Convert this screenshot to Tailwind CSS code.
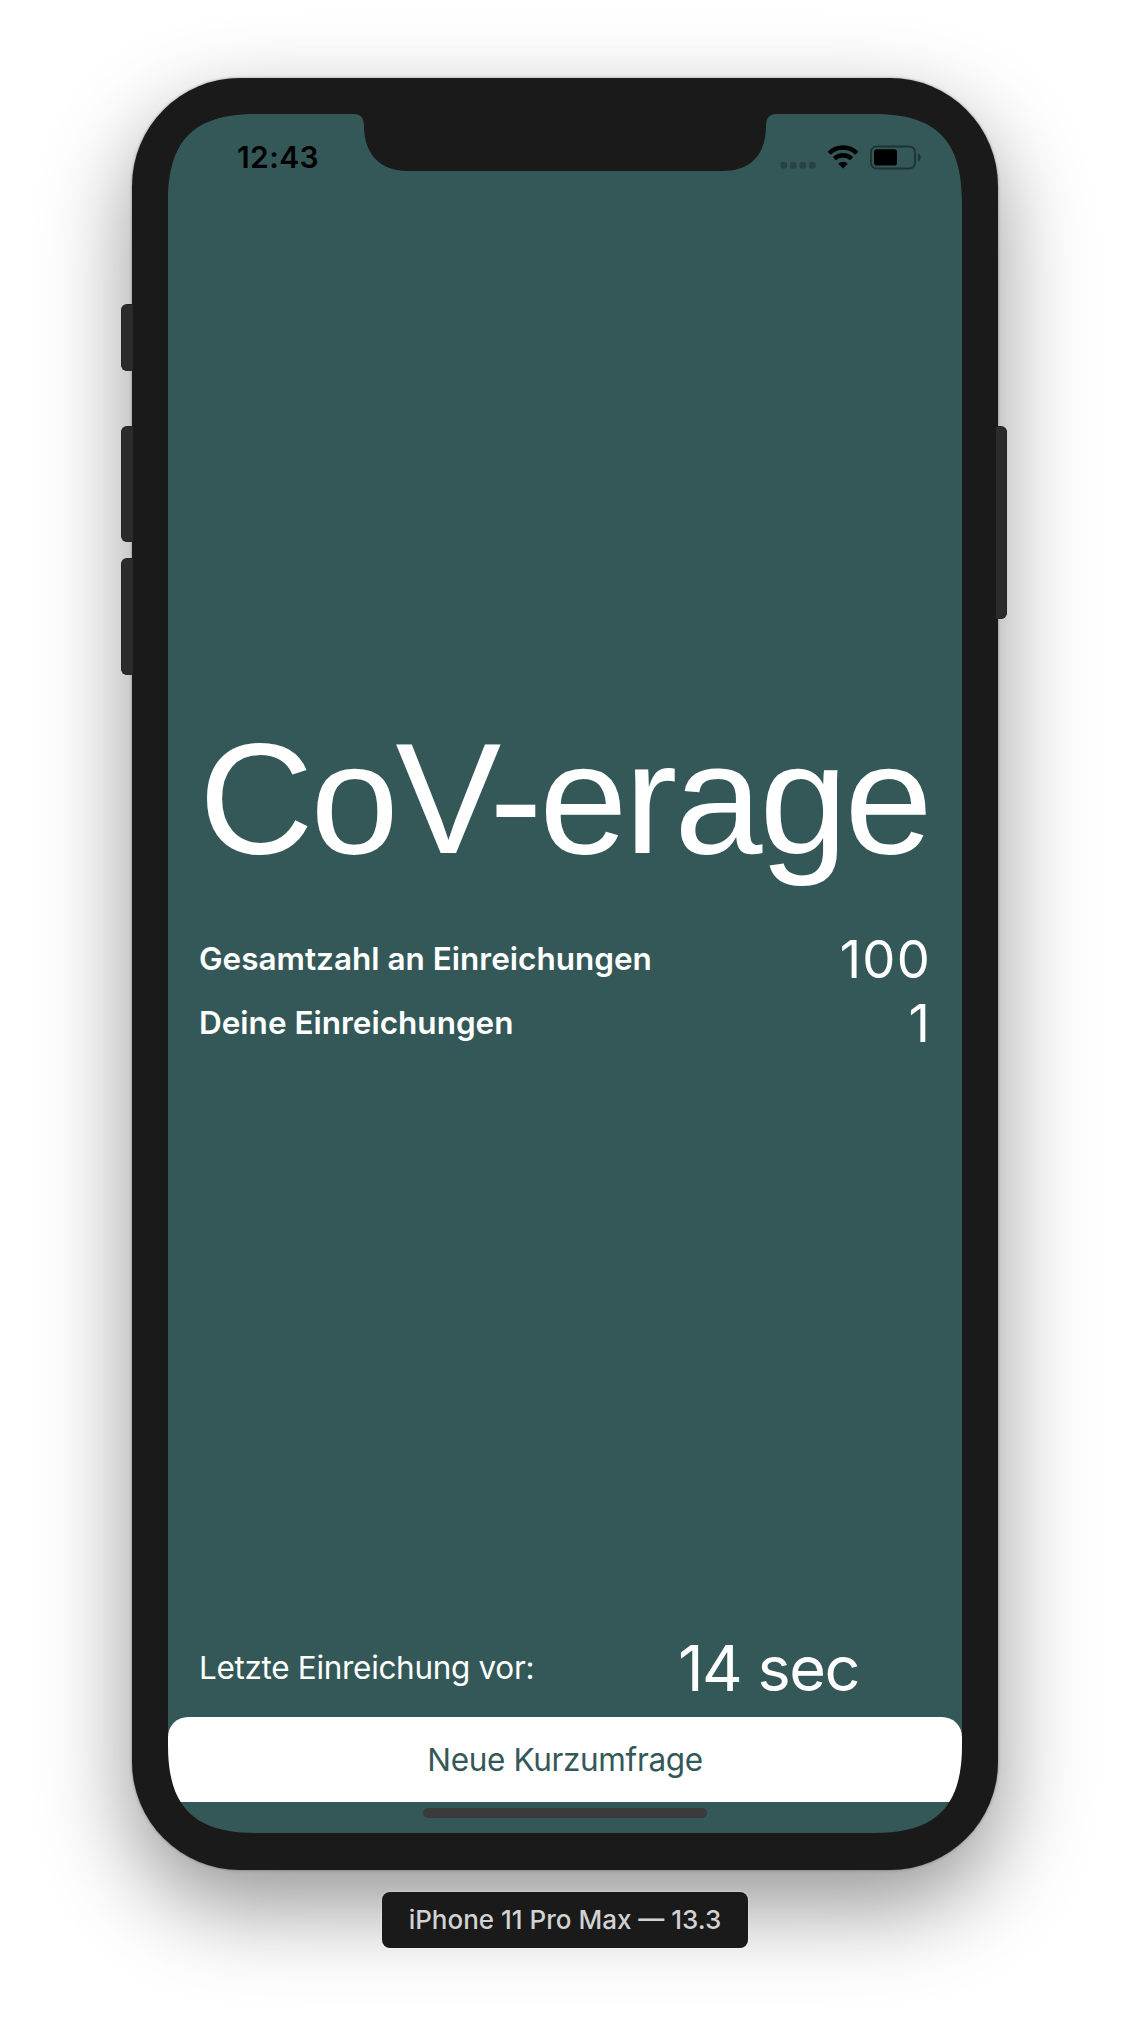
<!DOCTYPE html>
<html lang="de">
<head>
<meta charset="utf-8">
<title>CoV-erage</title>
<script src="https://cdn.jsdelivr.net/npm/@tailwindcss/browser@4"></script>
</head>
<body class="bg-white overflow-hidden font-['Inter',sans-serif]">
<div class="w-[1130px] h-[2020px] pt-[78px] flex flex-col items-center overflow-hidden">
  <div class="relative w-[866px] h-[1792px] shrink-0">
    <!-- hardware buttons -->
    <div class="absolute -left-[11px] top-[226px] w-[12px] h-[67px] rounded-l-[6px] bg-[#2b2b2b] border border-[#242424] z-10 border-r-0"></div>
    <div class="absolute -left-[11px] top-[348px] w-[12px] h-[116px] rounded-l-[6px] bg-[#2b2b2b] border border-[#242424] z-10 border-r-0"></div>
    <div class="absolute -left-[11px] top-[480px] w-[12px] h-[117px] rounded-l-[6px] bg-[#2b2b2b] border border-[#242424] z-10 border-r-0"></div>
    <div class="absolute -right-[9px] top-[348px] w-[11px] h-[193px] rounded-r-[6px] bg-[#2b2b2b] border border-[#242424] z-10 border-l-0"></div>
    <!-- body -->
    <div class="w-full h-full rounded-[108px] bg-[#1a1a1a] px-9 pt-9 pb-[37px] shadow-[0_0_3px_rgba(0,0,0,0.35),0_36px_90px_rgba(0,0,0,0.42)]">
      <div class="w-[794px] h-[1719px] bg-[#345857] text-white flex flex-col [clip-path:path('M0_88_C0_26_26_0_88_0_H185_C193_0_196_4_196_12_C196_40_212_57_240_57_H555_C583_57_598_40_598_12_C598_4_601_0_609_0_H706_C768_0_794_26_794_88_V1631_C794_1693_768_1719_706_1719_H88_C26_1719_0_1693_0_1631_Z')]">
        <!-- status bar -->
        <div class="h-[88px] pl-[69px] pr-[40px] flex justify-between text-black">
          <div class="mt-[24px] text-[30px] leading-[38px] font-semibold tracking-[0.4px]">12:43</div>
          <svg class="mt-[30px]" width="142" height="26" viewBox="0 0 142 26">
            <g fill="#000" fill-opacity=".25">
              <rect x="0.5" y="18" width="6.5" height="6.5" rx="1.7"/><rect x="10" y="18" width="6.5" height="6.5" rx="1.7"/><rect x="19.5" y="18" width="6.5" height="6.5" rx="1.7"/><rect x="29" y="18" width="6.5" height="6.5" rx="1.7"/>
            </g>
            <g fill="none" stroke="#000" stroke-width="4.4">
              <path d="M49.2 9.2a19.5 19.5 0 0 1 27.6 0"/>
              <path d="M54.4 14.7a12.4 12.4 0 0 1 17.2 0"/>
            </g>
            <path d="M63 24.4l-4.8-4.7a6.9 6.9 0 0 1 9.6 0z"/>
            <rect x="91" y="2.5" width="44" height="22" rx="5.5" fill="none" stroke="#000" stroke-opacity=".4" stroke-width="2"/>
            <rect x="94" y="5.3" width="23" height="16.3" rx="2.8"/>
            <path d="M138 9.300c2 1 2.7 2.6 2.7 4.200s-.7 3.200-2.7 4.200z" fill-opacity=".4"/>
          </svg>
        </div>
        <!-- totals -->
        <div class="flex-1 flex flex-col px-[31px] pt-[493px]">
          <h1 class="h-[208px] mb-[24px] text-[158.5px] leading-[208px] whitespace-nowrap tracking-[-3px] font-['Liberation_Sans',sans-serif]">CoV-erage</h1>
          <div class="h-[64px] flex items-center justify-between">
            <span class="text-[31.5px] font-semibold">Gesamtzahl an Einreichungen</span>
            <span class="text-[52.5px] tracking-[1.2px]">100</span>
          </div>
          <div class="h-[64px] flex items-center justify-between">
            <span class="text-[31.5px] font-semibold">Deine Einreichungen</span>
            <span class="text-[52.5px] tracking-[1.2px]">1</span>
          </div>
        </div>
        <!-- last submission -->
        <div class="h-[98px] pl-[31px] pr-[103px] flex items-center justify-between">
          <span class="text-[31.5px] tracking-[-0.32px]">Letzte Einreichung vor:</span>
          <span class="text-[63px] tracking-[-1.5px]">14 sec</span>
        </div>
        <button class="h-[85px] pt-[1px] w-full rounded-t-[20px] bg-white text-[#345857] text-[31.5px] tracking-[-0.35px]">Neue Kurzumfrage</button>
        <div class="h-[31px] pt-[6px] flex justify-center">
          <div class="w-[284px] h-[10px] rounded-full bg-[#3b3b3b]"></div>
        </div>
      </div>
    </div>
  </div>
  <div class="relative mt-[22px] pb-[2px] w-[366px] h-[56px] rounded-[8px] bg-[#1a1a1a] text-[#d2d2d2] text-[26px] font-medium flex items-center justify-center shadow-[0_0_3px_rgba(255,255,255,0.5)] whitespace-nowrap">iPhone 11 Pro Max — 13.3</div>
</div>
</body>
</html>
